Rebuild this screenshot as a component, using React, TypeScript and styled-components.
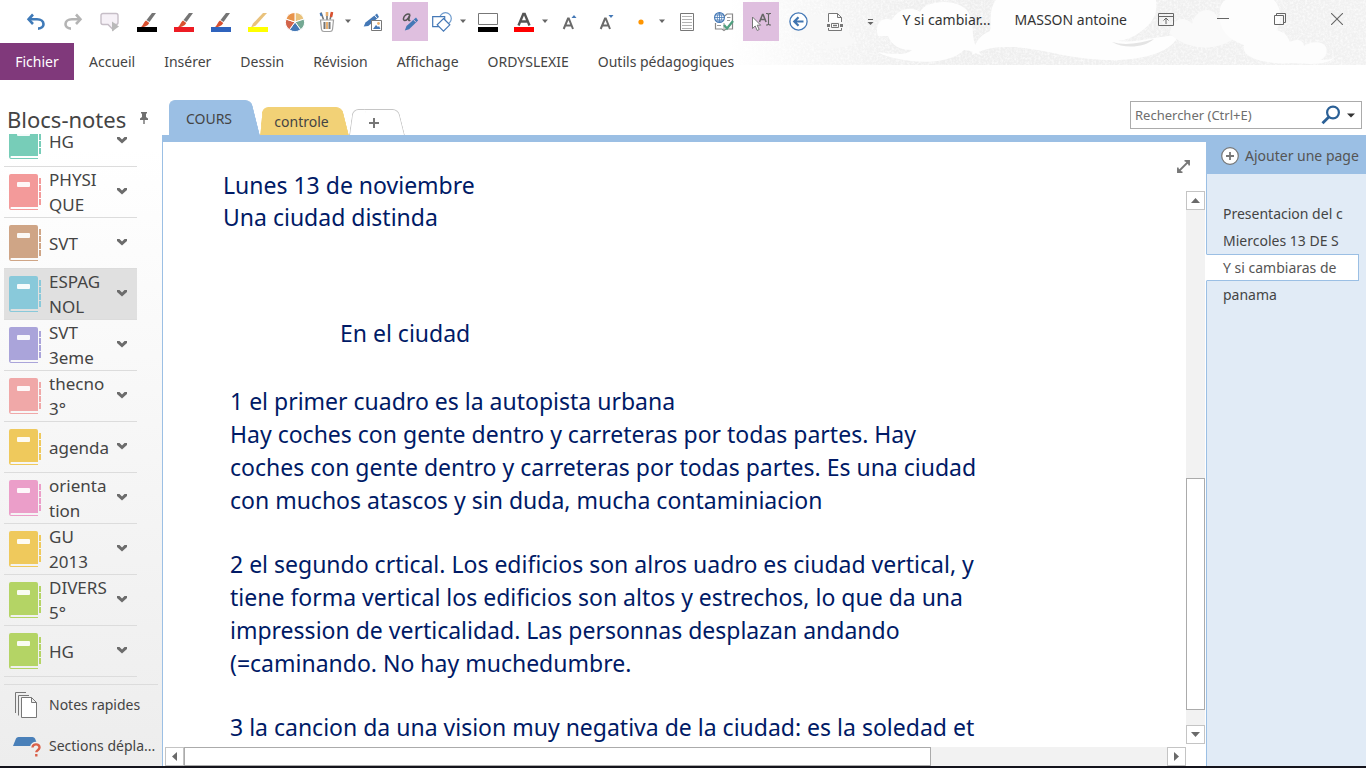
import React from "react";
import styled, { createGlobalStyle, css } from "styled-components";

const BLUE = "#9bbfe4";
const INK = "#444444";

const GlobalStyle = createGlobalStyle`
  *, *::before, *::after { box-sizing: border-box; }
  html, body { margin: 0; height: 100%; }
  body { background: #ffffff; color: ${INK}; font: 14px/20px "Noto Sans", "Open Sans", sans-serif; }
  button, input { font: inherit; color: inherit; margin: 0; }
  h2, p, ul { margin: 0; padding: 0; font-weight: 400; }
  ul { list-style: none; }
`;

const plainButton = css`
  display: flex;
  align-items: center;
  justify-content: center;
  border: 0;
  padding: 0;
  background: none;
  cursor: pointer;
`;

/* ---------- frame ---------- */

const Window = styled.div`
  position: relative;
  display: flex;
  flex-direction: column;
  height: 100vh;
  overflow: hidden;
  border-bottom: 2px solid #14141c;
`;

const HeaderArt = styled.svg`
  position: absolute;
  top: 0;
  right: 0;
  z-index: -1;
`;

const TitleBar = styled.header`
  display: flex;
  flex: none;
  height: 43px;
  padding-left: 18px;
`;

const QuickAccess = styled.div`
  display: flex;
  gap: 1px;
  padding: 2px 0;
`;

const ToolButton = styled.button<{ $width?: number; $active?: boolean; $menu?: boolean }>`
  ${plainButton}
  width: ${(p) => p.$width ?? 36}px;
  gap: 7px;
  background: ${(p) => (p.$active ? "#dfbfdf" : "transparent")};

  ${(p) =>
    p.$menu &&
    css`
      justify-content: flex-end;
      padding-right: 2px;
    `}
`;

const DocumentTitle = styled.div`
  display: flex;
  flex: 1;
  justify-content: flex-end;
  gap: 24px;
  min-width: 0;
  padding: 10px 10px 0 0;
  white-space: nowrap;
  color: #333333;
`;

const WindowControls = styled.div`
  display: flex;
  height: 38px;
  padding-right: 1px;
`;

const WindowButton = styled.button`
  ${plainButton}
  width: 57px;
`;

const Ribbon = styled.nav`
  display: flex;
  flex: none;
  height: 37px;
`;

const FileTab = styled.button`
  ${plainButton}
  width: 74px;
  background: #80397b;
  color: #ffffff;
`;

const RibbonTab = styled.button`
  ${plainButton}
  margin-left: 15px;
  padding-right: 14px;
  white-space: nowrap;
`;

const Body = styled.div`
  display: flex;
  flex: 1;
  min-height: 0;
`;

/* ---------- notebooks ---------- */

const Sidebar = styled.aside`
  display: flex;
  flex-direction: column;
  flex: none;
  width: 162px;
  padding-top: 26px;
  background: linear-gradient(#ffffff 10%, #ededed);
`;

const SidebarHeader = styled.div`
  display: flex;
  flex: none;
  justify-content: space-between;
  height: 28px;
  padding: 0 14px 0 7px;
`;

const SidebarTitle = styled.h2`
  font-size: 22px;
  line-height: 26px;
`;

const PinButton = styled.button`
  ${plainButton}
  height: 24px;
`;

const NotebookList = styled.ul`
  display: flex;
  flex-direction: column;
  flex: 1;
  justify-content: flex-end;
  min-height: 0;
  overflow: hidden;
  padding: 0 25px 0 4px;
`;

const Notebook = styled.li<{ $selected?: boolean }>`
  flex: none;
  height: 51px;
  border-bottom: 1px solid #dcdcdc;
  background: ${(p) => (p.$selected ? "#e0e0e0" : "transparent")};
`;

const NotebookButton = styled.button`
  ${plainButton}
  justify-content: flex-start;
  width: 100%;
  height: 50px;
  padding: 0 10px 0 5px;
  text-align: left;
`;

const NotebookName = styled.span`
  flex: 1;
  min-width: 0;
  padding-left: 8px;
  font-size: 17px;
  line-height: 25px;
  white-space: pre;
`;

const SidebarFooter = styled.div`
  display: grid;
  flex: none;
  gap: 1px;
  margin: 7px 4px 0;
  border-top: 1px solid #dcdcdc;
`;

const FooterButton = styled.button`
  ${plainButton}
  justify-content: flex-start;
  gap: 8px;
  width: 100%;
  height: 40px;
  padding-left: 8px;
  white-space: nowrap;
`;

/* ---------- workspace ---------- */

const Workspace = styled.main`
  display: flex;
  flex-direction: column;
  flex: 1;
  min-width: 0;
`;

const SectionBar = styled.div`
  display: flex;
  flex: none;
  align-items: flex-end;
  height: 55px;
  padding: 0 4px 0 7px;
`;

const SectionTab = styled.button<{
  $width: number;
  $height: number;
  $fill: string;
  $line?: string;
  $lean?: number;
}>`
  ${plainButton}
  position: relative;
  z-index: 0;
  width: ${(p) => p.$width}px;
  height: ${(p) => p.$height}px;
  padding: 2px ${(p) => (p.$lean ? 6 : 11)}px 0 0;

  &::before,
  &::after {
    content: "";
    position: absolute;
    z-index: -1;
    top: 0;
    bottom: 0;
    width: 60%;
    background: ${(p) => p.$fill};
    border: 0 solid ${(p) => p.$line ?? p.$fill};
    border-top-width: 1px;
    transform-origin: bottom;
  }
  &::before {
    left: 0;
    border-left-width: 1px;
    border-top-left-radius: 6px;
    transform: skewX(-${(p) => p.$lean ?? 0}deg);
  }
  &::after {
    right: 0;
    border-right-width: 1px;
    border-top-right-radius: 6px;
    transform: skewX(14deg);
  }
`;

const SearchBox = styled.form`
  display: flex;
  align-items: center;
  width: 232px;
  height: 28px;
  margin: 0 0 6px auto;
  border: 1px solid #ababab;
  background: #ffffff;
`;

const SearchInput = styled.input`
  flex: 1;
  min-width: 0;
  border: 0;
  padding: 0 4px;
  outline: 0;
  background: none;
  font-size: 13px;

  &::placeholder { color: #6e6e6e; opacity: 1; }
`;

const SearchButton = styled.button`
  ${plainButton}
  padding-right: 6px;
`;

const Content = styled.div`
  display: flex;
  flex: 1;
  min-height: 0;
  border-top: 7px solid ${BLUE};
  border-left: 1px solid ${BLUE};
`;

const Editor = styled.section`
  position: relative;
  display: grid;
  flex: 1;
  grid-template-columns: minmax(0, 1fr) 19px;
  grid-template-rows: minmax(0, 1fr) 19px;
  row-gap: 3px;
  min-width: 0;
  padding-right: 1px;
  background: #ffffff;
`;

const Sheet = styled.article`
  overflow: hidden;
  padding: 27px 0 0 60px;
  color: #001a66;
  font: 23px/33px "Comic Sans MS", "Noto Sans", sans-serif;
  white-space: pre;
`;

const Heading = styled.p`
  line-height: 32px;
`;

const Subheading = styled.p`
  padding: 84px 0 35px 117px;
`;

const Paragraph = styled.p`
  padding: 0 0 31px 7px;
`;

const ExpandButton = styled.button`
  ${plainButton}
  position: absolute;
  top: 18px;
  right: 16px;
`;

const VerticalScroll = styled.div`
  display: flex;
  flex-direction: column;
  margin-top: 49px;
  background: #f2f2f2;
`;

const HorizontalScroll = styled.div`
  display: flex;
  padding-left: 2px;
  background: #ffffff;
`;

const ScrollButton = styled.button`
  ${plainButton}
  flex: none;
  width: 19px;
  height: 19px;
  border: 1px solid #c4c4c4;
  background: #ffffff;
`;

const ScrollTrack = styled.div<{ $share: number }>`
  flex: ${(p) => p.$share} 1 0;
  background: #f2f2f2;
`;

const ScrollThumb = styled.div<{ $share: number }>`
  flex: ${(p) => p.$share} 1 0;
  border: 1px solid #ababab;
  background: #ffffff;
`;

/* ---------- page list ---------- */

const PagePanel = styled.aside`
  flex: none;
  width: 160px;
  border-left: 1px solid ${BLUE};
  background: #e1ebf6;
`;

const AddPage = styled.button`
  ${plainButton}
  justify-content: flex-start;
  gap: 6px;
  width: 100%;
  height: 32px;
  padding: 0 0 4px 14px;
  background: ${BLUE};
  color: #555555;
  white-space: nowrap;
`;

const PageList = styled.ul`
  padding: 26px 7px 0 0;
`;

const PageLink = styled.a<{ $selected?: boolean }>`
  display: block;
  height: 27px;
  margin-left: -1px;
  padding-left: 17px;
  overflow: hidden;
  color: ${INK};
  line-height: 27px;
  white-space: nowrap;
  text-decoration: none;

  ${(p) =>
    p.$selected &&
    css`
      border: 1px solid ${BLUE};
      border-left-color: #ffffff;
      padding-left: 16px;
      background: #ffffff;
      color: #555555;
      line-height: 25px;
    `}
`;

/* ---------- icons ---------- */

const Caret = () => (
  <svg width="8" height="5" viewBox="0 0 8 5"><path d="M1 0.5h6L4 4z" fill="#666" /></svg>
);

const Curl = ({ color, flip }: { color: string; flip?: boolean }) => (
  <svg width="20" height="18" viewBox="0 0 20 18">
    <g transform={flip ? "translate(20 0) scale(-1 1)" : undefined} fill="none" stroke={color} strokeWidth="2.6">
      <path d="M7 1.5 2.6 6.3 7 11" />
      <path d="M2.6 6.3H11C19.5 6.3 19.5 15.6 12 15.6" />
    </g>
  </svg>
);

const Callout = () => (
  <svg width="22" height="20" viewBox="0 0 22 20">
    <path d="M4 1.5h13a2 2 0 0 1 2 2v7a2 2 0 0 1-2 2h-3v5l-5-5H4a2 2 0 0 1-2-2v-7a2 2 0 0 1 2-2z" fill="#f6f1f7" stroke="#c6bec7" strokeWidth="1.4" />
    <path d="M13 9.500l7 5-7 5z" fill="#b9b9b9" />
  </svg>
);

const Brush = ({ color }: { color: string }) => (
  <svg width="20" height="20" viewBox="0 0 20 20">
    <path d="M19 1h-4l-5.500 7 3 2z" fill="#757575" />
    <path d="M9 8.500l3.300 2.500c-1.500 3-5 4.300-9.300 4.500 3.200-1.200 3.300-5 6-7z" fill="#d9502f" />
    <path d="M0 15h20v5H0z" fill={color} />
  </svg>
);

const Highlighter = () => (
  <svg width="20" height="20" viewBox="0 0 20 20">
    <path d="M19 1h-4L5 11.500 3 15.500l4.500-1.700z" fill="#e9c27c" />
    <path d="M0 15h20v5H0z" fill="#ffff00" />
  </svg>
);

const wheelColors = ["#e9c27c", "#74a893", "#4478b6", "#d2644a", "#e8934a"];
const wheelPoint = (turn: number) => {
  const angle = (turn * 72 - 90) * (Math.PI / 180);
  return `${10 + 9.5 * Math.cos(angle)} ${10 + 9.5 * Math.sin(angle)}`;
};
const ColorWheel = () => (
  <svg width="20" height="20" viewBox="0 0 20 20">
    {wheelColors.map((color, i) => (
      <path key={color} d={`M10 10L${wheelPoint(i)}A9.5 9.5 0 0 1 ${wheelPoint(i + 1)}z`} fill={color} stroke="#fff" />
    ))}
  </svg>
);

const PenCup = () => (
  <svg width="20" height="22" viewBox="-2 0 20 22">
    <path d="M2 1.500l2.500 7M8 1v8M13 1.500l-2 7" stroke="#777" strokeWidth="1.600" />
    <path d="M1.500 2l1 3" stroke="#4478b6" strokeWidth="2" />
    <path d="M8 1v4" stroke="#e9b070" strokeWidth="2.600" />
    <path d="M13 1l-1 5" stroke="#d9502f" strokeWidth="2.600" />
    <path d="M1.500 9h13l-1 9.500c-.2 1.500-1 2-2.500 2H5c-1.500 0-2.300-.5-2.500-2z" fill="#fff" stroke="#a0a0a0" strokeWidth="1.200" />
    <path d="M5.500 11v7M10.500 11v7" stroke="#757575" strokeWidth="2" />
    <path d="M8 11v7" stroke="#e9b070" strokeWidth="2" />
  </svg>
);

const PenPicture = () => (
  <svg width="20" height="20" viewBox="0 0 20 20">
    <path d="M14 1.500l-11.500 9L.7 14.600l4.600-.6L16 5z" fill="#4478b6" />
    <path d="M11.300 2.900l2.500 3" stroke="#fff" />
    <path d="M8.500 8.500h10v10h-10z" fill="#fff" stroke="#777" />
    <path d="M10 17l3-4 2 2 1-1 1.500 3z" fill="#4478b6" />
    <circle cx="15.500" cy="11.500" r="1.400" fill="#e9b070" />
  </svg>
);

const InkText = () => (
  <svg width="18" height="20" viewBox="0 0 18 20">
    <path d="M9 2.500C6 1 3 3.500 2.500 6.300 2 9 5 9.200 7 6.500l2-4-1.300 5c-.2 1 .6 1.300 1.600.6" fill="none" stroke="#555" strokeWidth="1.500" />
    <path d="M15 5.500l-9.500 8.500L3.800 18.500l4.300-1.300 9-8.700z" fill="#4478b6" />
    <path d="M12.400 7.500l2.500 2.700" stroke="#dfbfdf" />
  </svg>
);

const Shapes = () => (
  <svg width="20" height="20" viewBox="0 0 20 20">
    <circle cx="13.500" cy="6.500" r="5.800" fill="#fff" stroke="#6f9bcc" strokeWidth="1.200" />
    <path d="M.7 4.700h12v10H.7z" fill="#fff" stroke="#4478b6" strokeWidth="1.200" />
    <path d="M11.500 6.500l6.300 6.300-6.300 6.300-6.300-6.300z" fill="#fff" stroke="#4478b6" strokeWidth="1.200" />
  </svg>
);

const LineColor = () => (
  <svg width="20" height="20" viewBox="0 0 20 20">
    <path d="M.5 1.500h19v11H.5z" fill="#fff" stroke="#777" />
    <path d="M0 15h20v5H0z" />
  </svg>
);

const FontColor = () => (
  <svg width="20" height="20" viewBox="0 0 20 20">
    <path d="M4.500 13.500L9.300 2h1.400L15.500 13.500M6.300 9.500h7.400" fill="none" stroke="#555" strokeWidth="2.400" />
    <path d="M0 15h20v5H0z" fill="#ff0000" />
  </svg>
);

const FontSize = ({ down }: { down?: boolean }) => (
  <svg width="16" height="18" viewBox="0 0 16 18">
    <path d="M1.700 16L6 5.500h.8L11 16M3.400 12.500h6" fill="none" stroke="#6a6a6a" strokeWidth="2" />
    <path d={down ? "M9.500 2h5L12 5z" : "M9.500 5h5L12 2z"} fill="#4478b6" />
  </svg>
);

const Bullet = () => (
  <svg width="20" height="8" viewBox="0 0 20 8"><circle cx="10" cy="4" r="2.600" fill="#ff9500" /></svg>
);

const PageLines = () => (
  <svg width="14" height="18" viewBox="0 0 14 18">
    <path d="M.5.5h13v17H.5z" fill="#fff" stroke="#777" />
    <path d="M2 3.500h10M2 6.500h10M2 9.500h10M2 12.500h10M2 15.500h10" stroke="#b4b4b4" />
  </svg>
);

const WebCheck = () => (
  <svg width="20" height="20" viewBox="0 0 20 20">
    <path d="M10 4.500l3-2.500h5.500v15H12l-2 1.500L8 17H1.500v-6" fill="#fff" stroke="#888" strokeWidth="1.200" />
    <path d="M13 5.500h3.500M13 8.500h3M3 13.500h4M10 11v7" stroke="#999" />
    <circle cx="5.500" cy="5.500" r="4.900" fill="#fff" stroke="#4478b6" strokeWidth="1.200" />
    <path d="M.6 5.500h9.800M5.500.6v9.800M1.500 3h8M1.500 8h8M5.500.6C2.500 3 2.500 8 5.500 10.400 8.500 8 8.500 3 5.500.6" fill="none" stroke="#4478b6" strokeWidth=".8" />
    <path d="M10 13l3 3.500L19 9" fill="none" stroke="#4f9f7f" strokeWidth="2.300" />
  </svg>
);

const SelectText = () => (
  <svg width="20" height="20" viewBox="0 0 20 20">
    <path d="M1.500 5v11.500l2.700-2.500 2 4.500 2-1-2-4.300h3.500z" fill="#fff" stroke="#777" />
    <path d="M8.500 10l3-7.500h.6l3 7.500M9.600 7.500h4.500" fill="none" stroke="#666" strokeWidth="1.600" />
    <path d="M15 1.500h1.500l1 1 1-1H20M17.500 2v10M15 13h1.500l1-1 1 1H20" fill="none" stroke="#666" strokeWidth="1.100" />
  </svg>
);

const BackCircle = () => (
  <svg width="19" height="19" viewBox="0 0 19 19">
    <circle cx="9.500" cy="9.500" r="8.600" fill="#fff" stroke="#4478b6" strokeWidth="1.300" />
    <path d="M14.500 9.500H6M9.500 5.300L5.300 9.500l4.200 4.200" fill="none" stroke="#3f74b0" strokeWidth="2.200" />
  </svg>
);

const PrintPage = () => (
  <svg width="16" height="20" viewBox="0 0 16 20">
    <path d="M1.500 10V1.500h9l4 4V10M10.500 1.500v4h4" fill="#fff" stroke="#777" />
    <path d="M0 13.500h3M13 13.500h3" stroke="#777" strokeWidth="3" />
    <path d="M4.500 11.500h7v4h-7z" fill="#fff" stroke="#777" />
    <path d="M6 13.500h4" stroke="#777" strokeWidth="1.500" />
    <path d="M1.500 16v2.500h13V16" fill="none" stroke="#777" />
  </svg>
);

const CustomizeCaret = () => (
  <svg width="7" height="8" viewBox="0 0 7 8"><path d="M1 1.500h5" stroke="#666" /><path d="M.5 4h6l-3 3z" fill="#666" /></svg>
);

const RibbonToggle = () => (
  <svg width="16" height="13" viewBox="0 0 16 13">
    <path d="M.5.5h15v12H.5zM.5 3.500h15M8 11V5M5.500 7.500L8 5l2.500 2.500" fill="none" stroke="#666" />
  </svg>
);
const Minimize = () => (
  <svg width="12" height="12" viewBox="0 0 12 12"><path d="M0 5.500h12" stroke="#666" /></svg>
);
const Restore = () => (
  <svg width="12" height="12" viewBox="0 0 12 12">
    <path d="M.5 2.500h9v9h-9zM2.500 2.500v-2h9v9h-2" fill="none" stroke="#666" />
  </svg>
);
const Close = () => (
  <svg width="12" height="12" viewBox="0 0 12 12"><path d="M0 0l12 12M12 0L0 12" stroke="#666" strokeWidth="1.100" /></svg>
);

const Pin = () => (
  <svg width="8" height="12" viewBox="0 0 8 12">
    <path d="M1 0h6v1.500H6V5l2 1.500V8H4.700v4H3.300V8H0V6.500L2 5V1.500H1z" fill="#707070" />
  </svg>
);

const Book = ({ color }: { color: string }) => (
  <svg width="32" height="36" viewBox="0 0 32 36">
    <path d="M2 0h25a2 2 0 0 1 2 2v31H3C1.500 33 1 33.600 1 34.500L0 34V2a2 2 0 0 1 2-2z" fill={color} />
    <path d="M0 33c0 2 .8 3 2 3h27v-1H2.500C1.500 35 1 34 1.500 33z" fill={color} />
    <rect x="8" y="8" width="13" height="5" rx="1" fill="#fff" fillOpacity=".92" />
    <path d="M30 4h2v6h-2zM30 11h2v6h-2zM30 18h2v6h-2zM30 25h2v6h-2z" fill={color} />
  </svg>
);

const Chevron = () => (
  <svg width="10" height="8" viewBox="0 0 10 8">
    <path d="M0 0h2.500L5 2.500 7.500 0H10v2L5 6.500 0 2z" fill="#6c6c6c" />
  </svg>
);

const QuickNotes = () => (
  <svg width="29" height="26" viewBox="0 0 29 26">
    <path d="M3.500 21V.5H14M6.500 23.500v-20H17" fill="none" stroke="#777" />
    <path d="M9.500 5.500h10l5 5v15h-15zM19.500 5.500v5h5" fill="#fff" stroke="#777" />
  </svg>
);

const MisplacedSections = () => (
  <svg width="29" height="22" viewBox="0 0 29 22">
    <path d="M1 11L4 3.500Q4.600 2 6.500 2h14q1.800 0 2.500 1.500L26 11z" fill="#4a80b9" />
    <path d="M20.500 12.500c.2-4.500 7.300-4 7 .2-.2 2.600-3.200 2.500-3.200 5.300" fill="none" stroke="#f0f0f0" strokeWidth="5" />
    <path d="M20.500 12.500c.2-4.500 7.300-4 7 .2-.2 2.600-3.200 2.500-3.200 4.500M24.300 19v2.500" fill="none" stroke="#d9604a" strokeWidth="2.400" />
  </svg>
);

const Plus = () => (
  <svg width="10" height="10" viewBox="0 0 10 10"><path d="M0 5h10M5 0v10" stroke="#777" strokeWidth="2" /></svg>
);

const Magnifier = () => (
  <svg width="20" height="20" viewBox="0 0 20 20">
    <circle cx="12" cy="7.500" r="5.900" fill="none" stroke="#2b6096" strokeWidth="2.200" />
    <path d="M7.800 12L1.500 18.200" stroke="#2b6096" strokeWidth="2.800" />
  </svg>
);

const SearchCaret = () => (
  <svg width="8" height="5" viewBox="0 0 8 5"><path d="M0 .5h8L4 4.500z" fill="#333" /></svg>
);

const PlusCircle = () => (
  <svg width="18" height="18" viewBox="0 0 18 18">
    <circle cx="9" cy="9" r="8.300" fill="#fff" stroke="#777" strokeWidth="1.200" />
    <path d="M5 9h8M9 5v8" stroke="#777" strokeWidth="1.800" />
  </svg>
);

const Expand = () => (
  <svg width="13" height="13" viewBox="0 0 13 13">
    <path d="M2.500 10.500l8-8" stroke="#777" strokeWidth="1.800" />
    <path d="M7.500.8h4.700v4.700M5.500 12.200H.8V7.500" fill="none" stroke="#777" strokeWidth="1.500" />
    <path d="M8 1h4v4zM1 8v4h4z" fill="#777" />
  </svg>
);

const arrowPaths = {
  up: "M0 7l4.500-5L9 7z",
  down: "M0 2h9L4.500 7z",
  left: "M7 0v9L2 4.500z",
  right: "M2 0v9l5-4.500z",
};
const Arrow = ({ to }: { to: keyof typeof arrowPaths }) => (
  <svg width="9" height="9" viewBox="0 0 9 9"><path d={arrowPaths[to]} fill="#6a6a6a" /></svg>
);

const CloudArt = () => (
  <HeaderArt width="636" height="65" viewBox="0 0 636 65" aria-hidden="true">
    <defs>
      <linearGradient id="fade">
        <stop offset="0" stopColor="#fff" />
        <stop offset=".12" stopColor="#f7f7f7" />
        <stop offset=".3" stopColor="#eeeeee" />
        <stop offset="1" stopColor="#f1f1f1" />
      </linearGradient>
      <filter id="grain" x="0" y="0" width="100%" height="100%">
        <feTurbulence type="fractalNoise" baseFrequency=".45" numOctaves="2" seed="4" />
        <feColorMatrix values="0 0 0 0 1  0 0 0 0 1  0 0 0 0 1  2.4 0 0 0 -.95" />
      </filter>
    </defs>
    <path d="M0 0h636v65H0z" fill="url(#fade)" />
    <path d="M0 0h636v65H0z" filter="url(#grain)" opacity=".7" />
    <path d="M62 30C70 12 100 12 112 22c8 8 6 16 14 18-4 8-24 10-40 8 8-2 14-4 16-7-14 2-34 0-40-11z" fill="#f8f8f8" />
    <path d="M148 36c-4-12 4-20 14-16C168 8 182 6 190 12 196-2 236-2 240 16c6 14-2 22 12 40-8-4-14-6-18-6-14 14-46 14-70 8-8-2-14-4-16-6 12 2 28 4 34-2-12 0-20-4-24-14z" fill="#fefefe" />
    <path d="M266 0h160c2 14-4 24-16 32-6 5-14 8-22 9 20 2 34-4 60-6-4 16-34 26-70 25-50-2-70-14-104-13-14 0-24 4-32 8 2-12 8-20 18-24C262 24 258 10 266 0z" fill="#fefefe" />
    <path d="M382 42c14 4 28 1 42-3-10 9-30 10-42 3z" fill="#e4e4e4" />
    <path d="M440 34c0-14 14-20 22-10 4-18 24-18 26-4 6-20 24-18 26-4l-4 18c-20 18-50 18-70 0z" fill="#fafafa" />
    <path d="M490 14C488-4 506-4 514 0h30c8 8 8 24 2 30 10 2 12 8 14 12 6-4 14-2 14 4 8-6 26-6 22 8-2 6-8 6-4 6 10 0 12-3 14-4-6 8-20 9-42 7-26 2-54-4-50-18C500 40 488 30 490 14z" fill="#fdfdfd" />
  </HeaderArt>
);

/* ---------- content ---------- */

type Tool = { label: string; icon: React.ReactNode; width?: number; active?: boolean; menu?: boolean };

const tools: Tool[] = [
  { label: "Annuler", icon: <Curl color="#3f7ab8" /> },
  { label: "Rétablir", icon: <Curl color="#b4b4b4" flip /> },
  { label: "Lire", icon: <Callout /> },
  { label: "Stylo noir", icon: <Brush color="#000000" /> },
  { label: "Stylo rouge", icon: <Brush color="#ed1c24" /> },
  { label: "Stylo bleu", icon: <Brush color="#2f63bd" /> },
  { label: "Surligneur jaune", icon: <Highlighter /> },
  { label: "Couleurs", icon: <ColorWheel /> },
  { label: "Stylos", icon: <PenCup />, width: 40, menu: true },
  { label: "Encre sur image", icon: <PenPicture /> },
  { label: "Encre en texte", icon: <InkText />, active: true },
  { label: "Formes", icon: <Shapes />, width: 40, menu: true },
  { label: "Couleur du trait", icon: <LineColor /> },
  { label: "Couleur de police", icon: <FontColor />, width: 44, menu: true },
  { label: "Agrandir la police", icon: <FontSize /> },
  { label: "Réduire la police", icon: <FontSize down /> },
  { label: "Puces", icon: <Bullet />, width: 42, menu: true },
  { label: "Page", icon: <PageLines /> },
  { label: "Vérifier", icon: <WebCheck /> },
  { label: "Sélectionner", icon: <SelectText />, active: true },
  { label: "Précédent", icon: <BackCircle /> },
  { label: "Imprimer", icon: <PrintPage /> },
  { label: "Personnaliser", icon: <CustomizeCaret />, width: 32 },
];

const ribbonTabs = ["Accueil", "Insérer", "Dessin", "Révision", "Affichage", "ORDYSLEXIE", "Outils pédagogiques"];

const notebooks = [
  { name: "HG", color: "#77cdb8" },
  { name: "PHYSI\nQUE", color: "#f39a9a" },
  { name: "SVT", color: "#cfa586" },
  { name: "ESPAG\nNOL", color: "#89c9da", selected: true },
  { name: "SVT\n3eme", color: "#aaa4da" },
  { name: "thecno\n3°", color: "#f0a8a8" },
  { name: "agenda", color: "#efc95c" },
  { name: "orienta\ntion", color: "#eb9ec9" },
  { name: "GU\n2013", color: "#efc95c" },
  { name: "DIVERS\n5°", color: "#b4d465" },
  { name: "HG", color: "#b4d465" },
];

const paragraphs = [
  `1 el primer cuadro es la autopista urbana
Hay coches con gente dentro y carreteras por todas partes. Hay
coches con gente dentro y carreteras por todas partes. Es una ciudad
con muchos atascos y sin duda, mucha contaminiacion`,
  `2 el segundo crtical. Los edificios son alros uadro es ciudad vertical, y
tiene forma vertical los edificios son altos y estrechos, lo que da una
impression de verticalidad. Las personnas desplazan andando
(=caminando. No hay muchedumbre.`,
  `3 la cancion da una vision muy negativa de la ciudad: es la soledad et`,
];

const pages = [
  { title: "Presentacion del c" },
  { title: "Miercoles 13 DE S" },
  { title: "Y si cambiaras de", selected: true },
  { title: "panama" },
];

export default function App() {
  return (
    <>
      <GlobalStyle />
      <Window>
        <CloudArt />
        <TitleBar>
          <QuickAccess>
            {tools.map((tool) => (
              <ToolButton
                key={tool.label}
                aria-label={tool.label}
                $width={tool.width}
                $active={tool.active}
                $menu={tool.menu}
              >
                {tool.icon}
                {tool.menu && <Caret />}
              </ToolButton>
            ))}
          </QuickAccess>
          <DocumentTitle>
            <span>Y si cambiar...</span>
            <span>MASSON antoine</span>
          </DocumentTitle>
          <WindowControls>
            <WindowButton aria-label="Options du ruban"><RibbonToggle /></WindowButton>
            <WindowButton aria-label="Réduire"><Minimize /></WindowButton>
            <WindowButton aria-label="Restaurer"><Restore /></WindowButton>
            <WindowButton aria-label="Fermer"><Close /></WindowButton>
          </WindowControls>
        </TitleBar>
        <Ribbon>
          <FileTab>Fichier</FileTab>
          {ribbonTabs.map((tab) => (
            <RibbonTab key={tab}>{tab}</RibbonTab>
          ))}
        </Ribbon>
        <Body>
          <Sidebar>
            <SidebarHeader>
              <SidebarTitle>Blocs-notes</SidebarTitle>
              <PinButton aria-label="Épingler"><Pin /></PinButton>
            </SidebarHeader>
            <NotebookList>
              {notebooks.map((book, i) => (
                <Notebook key={i} $selected={book.selected}>
                  <NotebookButton>
                    <Book color={book.color} />
                    <NotebookName>{book.name}</NotebookName>
                    <Chevron />
                  </NotebookButton>
                </Notebook>
              ))}
            </NotebookList>
            <SidebarFooter>
              <FooterButton><QuickNotes />Notes rapides</FooterButton>
              <FooterButton><MisplacedSections />Sections dépla...</FooterButton>
            </SidebarFooter>
          </Sidebar>
          <Workspace>
            <SectionBar>
              <SectionTab $width={91} $height={35} $fill={BLUE}>COURS</SectionTab>
              <SectionTab $width={89} $height={28} $fill="#f2d176" $lean={5}>controle</SectionTab>
              <SectionTab $width={56} $height={26} $fill="#ffffff" $line="#c6c6c6" $lean={8} aria-label="Nouvelle section">
                <Plus />
              </SectionTab>
              <SearchBox>
                <SearchInput aria-label="Rechercher" placeholder="Rechercher (Ctrl+E)" />
                <SearchButton type="button" aria-label="Lancer la recherche"><Magnifier /></SearchButton>
                <SearchButton type="button" aria-label="Étendue de la recherche"><SearchCaret /></SearchButton>
              </SearchBox>
            </SectionBar>
            <Content>
              <Editor>
                <Sheet>
                  <Heading>{"Lunes 13 de noviembre\nUna ciudad distinda"}</Heading>
                  <Subheading>En el ciudad</Subheading>
                  {paragraphs.map((text) => (
                    <Paragraph key={text}>{text}</Paragraph>
                  ))}
                </Sheet>
                <VerticalScroll>
                  <ScrollButton aria-label="Défiler vers le haut"><Arrow to="up" /></ScrollButton>
                  <ScrollTrack $share={269} />
                  <ScrollThumb $share={231} />
                  <ScrollTrack $share={15} />
                  <ScrollButton aria-label="Défiler vers le bas"><Arrow to="down" /></ScrollButton>
                </VerticalScroll>
                <HorizontalScroll>
                  <ScrollButton aria-label="Défiler vers la gauche"><Arrow to="left" /></ScrollButton>
                  <ScrollThumb $share={746} />
                  <ScrollTrack $share={236} />
                  <ScrollButton aria-label="Défiler vers la droite"><Arrow to="right" /></ScrollButton>
                </HorizontalScroll>
                <ExpandButton aria-label="Plein écran"><Expand /></ExpandButton>
              </Editor>
              <PagePanel>
                <AddPage><PlusCircle />Ajouter une page</AddPage>
                <PageList>
                  {pages.map((page) => (
                    <li key={page.title}>
                      <PageLink href="#" $selected={page.selected}>{page.title}</PageLink>
                    </li>
                  ))}
                </PageList>
              </PagePanel>
            </Content>
          </Workspace>
        </Body>
      </Window>
    </>
  );
}
